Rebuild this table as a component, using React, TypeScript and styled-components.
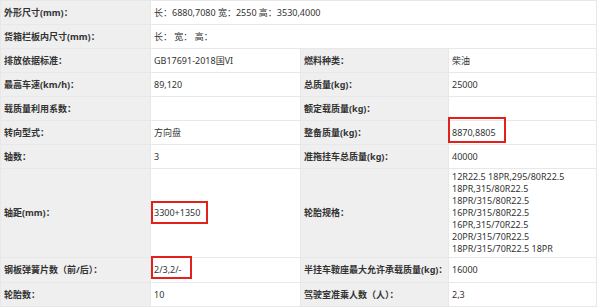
import React from "react";
import styled, { createGlobalStyle } from "styled-components";

type Mark = { top: number; bottom: number; left: number; right: number };
type Cell = { label: string; value?: string | string[]; mark?: Mark };
type Row = { cells: Cell[]; wide?: boolean };

const tyres = [
  "12R22.5 18PR,295/80R22.5",
  "18PR,315/80R22.5",
  "18PR/315/80R22.5",
  "16PR/315/80R22.5",
  "16PR,315/70R22.5",
  "20PR/315/70R22.5",
  "18PR/315/70R22.5 18PR",
];

const rows: Row[] = [
  { wide: true, cells: [{ label: "外形尺寸(mm)：", value: "长：6880,7080 宽：2550 高：3530,4000" }] },
  { wide: true, cells: [{ label: "货箱栏板内尺寸(mm)：", value: "长： 宽： 高：" }] },
  {
    cells: [
      { label: "排放依据标准：", value: "GB17691-2018国VI" },
      { label: "燃料种类：", value: "柴油" },
    ],
  },
  {
    cells: [
      { label: "最高车速(km/h)：", value: "89,120" },
      { label: "总质量(kg)：", value: "25000" },
    ],
  },
  {
    cells: [{ label: "载质量利用系数：" }, { label: "额定载质量(kg)：" }],
  },
  {
    cells: [
      { label: "转向型式：", value: "方向盘" },
      {
        label: "整备质量(kg)：",
        value: "8870,8805",
        mark: { top: -10, bottom: -4, left: -4, right: -10 },
      },
    ],
  },
  {
    cells: [
      { label: "轴数：", value: "3" },
      { label: "准拖挂车总质量(kg)：", value: "40000" },
    ],
  },
  {
    cells: [
      {
        label: "轴距(mm)：",
        value: "3300+1350",
        mark: { top: -6, bottom: -5, left: -3, right: -8 },
      },
      { label: "轮胎规格：", value: tyres },
    ],
  },
  {
    cells: [
      {
        label: "钢板弹簧片数（前/后）：",
        value: "2/3,2/-",
        mark: { top: -8, bottom: -3, left: -3, right: -11 },
      },
      { label: "半挂车鞍座最大允许承载质量(kg)：", value: "16000" },
    ],
  },
  {
    cells: [
      { label: "轮胎数：", value: "10" },
      { label: "驾驶室准乘人数（人）：", value: "2,3" },
    ],
  },
];

const GlobalStyle = createGlobalStyle`
  body {
    margin: 0;
    background: #ffffff;
    font-family: "Noto Sans", "Noto Sans CJK SC", sans-serif;
  }
`;

const Sheet = styled.div`
  display: grid;
  grid-template-columns: 149px 149px 147px 147px;
  grid-template-rows: repeat(7, 23px) 88px 24px 23px;
  gap: 1px;
  width: 595px;
  padding: 1px;
  background: #e8e8e8;
  font-size: 9px;
  line-height: 12px;
  color: #333333;
`;

const LabelCell = styled.div`
  display: flex;
  align-items: center;
  padding: 0 0 0 3px;
  background: #efefef;
  font-weight: 700;
  white-space: nowrap;
`;

const ValueCell = styled.div<{ $wide?: boolean }>`
  display: flex;
  flex-direction: column;
  justify-content: center;
  align-items: flex-start;
  padding: 0 3px;
  background: #ffffff;
  white-space: pre;
  grid-column: ${({ $wide }) => ($wide ? "span 3" : "span 1")};
`;

const TyreLine = styled.div`
  line-height: 12px;
`;

const Marked = styled.span<{ $top: number; $bottom: number; $left: number; $right: number }>`
  position: relative;

  &::after {
    content: "";
    position: absolute;
    top: ${({ $top }) => $top}px;
    bottom: ${({ $bottom }) => $bottom}px;
    left: ${({ $left }) => $left}px;
    right: ${({ $right }) => $right}px;
    border: 2px solid #e3211c;
  }
`;

const renderValue = (cell: Cell) => {
  if (Array.isArray(cell.value)) {
    return cell.value.map((line, i) => <TyreLine key={i}>{line}</TyreLine>);
  }
  if (cell.mark) {
    return (
      <Marked
        $top={cell.mark.top}
        $bottom={cell.mark.bottom}
        $left={cell.mark.left}
        $right={cell.mark.right}
      >
        {cell.value}
      </Marked>
    );
  }
  return cell.value;
};

const App = () => {
  return (
    <>
      <GlobalStyle />
      <Sheet>
        {rows.map((row, r) =>
          row.cells.map((cell, c) => (
            <React.Fragment key={`${r}-${c}`}>
              <LabelCell>{cell.label}</LabelCell>
              <ValueCell $wide={row.wide}>{renderValue(cell)}</ValueCell>
            </React.Fragment>
          ))
        )}
      </Sheet>
    </>
  );
};

export default App;
